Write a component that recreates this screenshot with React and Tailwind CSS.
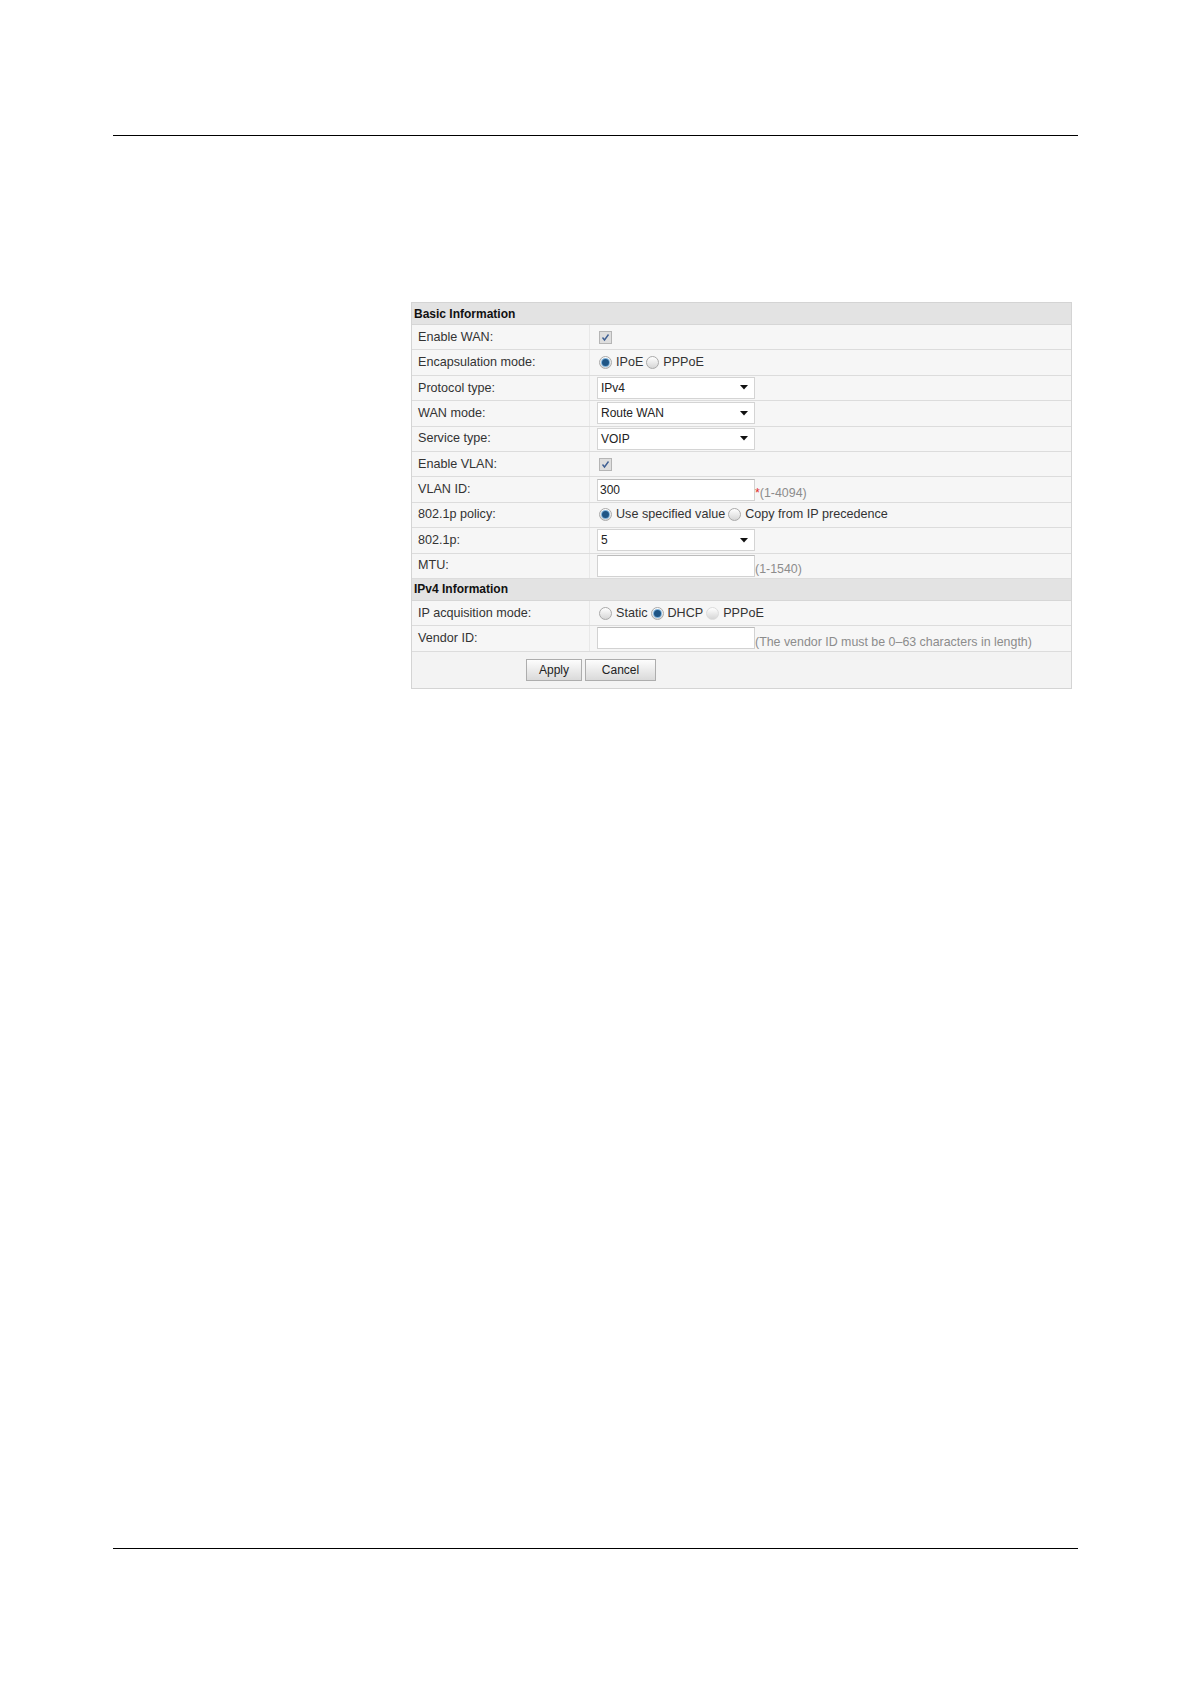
function Check() {
  return (
    <span className="ml-[2px] inline-flex w-[13px] h-[13px] items-center justify-center border border-[#b5b5b5] bg-[#dedede]">
      <svg width="9" height="9" viewBox="0 0 9 9">
        <path d="M1.5 4.5 L3.5 7 L7.5 1.5" fill="none" stroke="#3e5f93" strokeWidth="1.4" />
      </svg>
    </span>
  );
}

function Radio({ checked, faint }) {
  return (
    <span
      className={
        "inline-flex w-[13px] h-[13px] rounded-full items-center justify-center border bg-gradient-to-b from-[#ffffff] to-[#d6d6d6] " +
        (faint ? "border-[#dcdcdc]" : "border-[#a9a9a9]")
      }
    >
      {checked && (
        <span className="w-[7px] h-[7px] rounded-full bg-[#1f5585] ring-1 ring-[#7fb3dc]" />
      )}
    </span>
  );
}

function Select({ value }) {
  return (
    <div className="flex items-center justify-between w-[158px] h-[22px] border border-[#d4d4d4] bg-white pl-[3px] pr-[6px] text-[12px] text-[#222]">
      <span>{value}</span>
      <svg width="8" height="5" viewBox="0 0 8 5">
        <path d="M0 0 H8 L4 4.5 Z" fill="#111" />
      </svg>
    </div>
  );
}

function TextBox({ value }) {
  return (
    <div className="w-[158px] h-[22px] border border-[#d2d2d2] border-t-[#bcbcbc] bg-white pl-[2px] text-[12px] leading-[20px] text-[#222]">
      {value}
    </div>
  );
}

function Row({ label, children }) {
  return (
    <div className="flex h-[25.4px] border-b border-[#dcdcdc]">
      <div className="w-[178px] shrink-0 border-r border-[#e8e8e8] pl-[6px] flex items-center">
        {label}
      </div>
      <div className="flex-1 pl-[7px] flex items-center">{children}</div>
    </div>
  );
}

function Header({ title }) {
  return (
    <div className="h-[22px] bg-[#e3e3e3] border-b border-[#d6d6d6] pl-[2px] flex items-center text-[12px] font-bold text-[#111]">
      {title}
    </div>
  );
}

function Hint({ children }) {
  return <span className="self-end pb-[1px] text-[12.4px] leading-[15px] text-[#8c8c8c]">{children}</span>;
}

function Radios({ items }) {
  return (
    <div className="ml-[2px] flex items-center gap-[3px]">
      {items.map((it) => (
        <span key={it.text} className="flex items-center gap-[4px]">
          <Radio checked={it.checked} faint={it.faint} />
          <span>{it.text}</span>
        </span>
      ))}
    </div>
  );
}

export default function App() {
  return (
    <div
      className="w-[1191px] h-[1684px] bg-white flex flex-col pt-[135px] px-[113px]"
      style={{ fontFamily: '"Liberation Sans", Arial, sans-serif' }}
    >
      <div className="h-[1px] bg-black" />

      <div className="ml-[298px] mt-[166px] w-[661px] border border-[#d4d4d4] bg-[#f6f6f6] text-[12.6px] text-[#333]">
        <Header title="Basic Information" />
        <Row label="Enable WAN:">
          <Check />
        </Row>
        <Row label="Encapsulation mode:">
          <Radios items={[{ text: "IPoE", checked: true }, { text: "PPPoE" }]} />
        </Row>
        <Row label="Protocol type:">
          <Select value="IPv4" />
        </Row>
        <Row label="WAN mode:">
          <Select value="Route WAN" />
        </Row>
        <Row label="Service type:">
          <Select value="VOIP" />
        </Row>
        <Row label="Enable VLAN:">
          <Check />
        </Row>
        <Row label="VLAN ID:">
          <div className="flex h-full items-center">
            <TextBox value="300" />
            <Hint>
              <span className="text-[#e0302c]">*</span>(1-4094)
            </Hint>
          </div>
        </Row>
        <Row label="802.1p policy:">
          <Radios items={[{ text: "Use specified value", checked: true }, { text: "Copy from IP precedence" }]} />
        </Row>
        <Row label="802.1p:">
          <Select value="5" />
        </Row>
        <Row label="MTU:">
          <div className="flex h-full items-center">
            <TextBox value="" />
            <Hint>(1-1540)</Hint>
          </div>
        </Row>
        <Header title="IPv4 Information" />
        <Row label="IP acquisition mode:">
          <Radios
            items={[
              { text: "Static" },
              { text: "DHCP", checked: true },
              { text: "PPPoE", faint: true },
            ]}
          />
        </Row>
        <Row label="Vendor ID:">
          <div className="flex h-full items-center">
            <TextBox value="" />
            <Hint>(The vendor ID must be 0–63 characters in length)</Hint>
          </div>
        </Row>
        <div className="h-[36px] flex items-start pt-[7px] pl-[114px] gap-[3px] bg-[#f3f3f3]">
          <button className="w-[56px] h-[22px] border border-[#adadad] bg-gradient-to-b from-[#fdfdfd] to-[#dadada] text-[12px] text-[#222]">
            Apply
          </button>
          <button className="w-[71px] h-[22px] border border-[#adadad] bg-gradient-to-b from-[#fdfdfd] to-[#dadada] text-[12px] text-[#222]">
            Cancel
          </button>
        </div>
      </div>

      <div className="mt-auto mb-[135px] h-[1px] bg-black" />
    </div>
  );
}
